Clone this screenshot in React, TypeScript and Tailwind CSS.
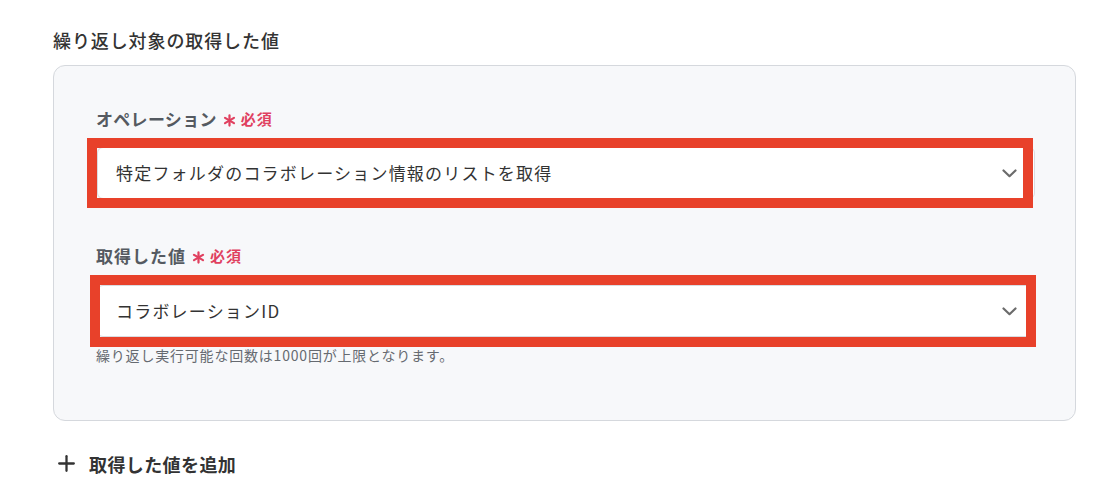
import { Plus } from "lucide-react";

const font = { fontFamily: '"Noto Sans CJK JP", "Noto Sans", sans-serif' };

function Required() {
  return (
    <span className="ml-[6px] inline-flex items-center text-[#e0405f]">
      <svg width="13" height="13" viewBox="0 0 14 14" className="mt-[2px]">
        <g stroke="currentColor" strokeWidth="2.4" strokeLinecap="round">
          <line x1="7" y1="1.5" x2="7" y2="12.5" />
          <line x1="2.2" y1="4.2" x2="11.8" y2="9.8" />
          <line x1="2.2" y1="9.8" x2="11.8" y2="4.2" />
        </g>
      </svg>
      <span className="ml-[5px] text-[15px] font-bold tracking-[1px]">必須</span>
    </span>
  );
}

function SelectBox({
  value,
  frame,
}: {
  value: string;
  frame: string;
}) {
  return (
    <div className="relative w-[938px]">
      <div className="flex h-[52px] items-center justify-between rounded-[6px] border border-[#d9dce1] bg-white pl-[18px] pr-[17px]">
        <span className="text-[17px] tracking-[1.2px] text-[#333333]">{value}</span>
        <svg width="15" height="9" viewBox="0 0 15 9" fill="none">
          <path d="M1.5 1.5 L7.5 7.2 L13.5 1.5" stroke="#6b6b6b" strokeWidth="2.2" strokeLinecap="round" strokeLinejoin="round" />
        </svg>
      </div>
      <div className={`pointer-events-none absolute border-[10px] border-[#e8412a] ${frame}`} />
    </div>
  );
}

export default function App() {
  return (
    <div className="min-h-[497px] w-[1118px] bg-white pl-[53px] pt-[28px]" style={font}>
      <h2 className="mb-[13px] text-[18px] font-medium leading-[24px] tracking-[0.9px] text-[#333333]">
        繰り返し対象の取得した値
      </h2>

      <div className="w-[1023px] rounded-[12px] border border-[#d5d8dd] bg-[#f7f8fa] pb-[56px] pl-[42px] pt-[41px]">
        <div className="flex items-center text-[17px] font-bold leading-[24px] tracking-[0.3px] text-[#555a61]">
          オペレーション
          <Required />
        </div>
        <div className="mt-[16px] pl-[1px]">
          <SelectBox
            value="特定フォルダのコラボレーション情報のリストを取得"
            frame="left-[-10px] right-[2px] top-[-9px] bottom-[-9px]"
          />
        </div>

        <div className="mt-[45px] flex items-center text-[17px] font-bold leading-[24px] tracking-[1px] text-[#555a61]">
          取得した値
          <Required />
        </div>
        <div className="mt-[17px] pl-[1px]">
          <SelectBox
            value="コラボレーションID"
            frame="left-[-7px] right-[-1px] top-[-10px] bottom-[-10px]"
          />
        </div>
        <p className="mt-[9px] text-[14px] leading-[18px] tracking-[0.8px] text-[#666a70]">
          繰り返し実行可能な回数は1000回が上限となります。
        </p>
      </div>

      <button className="mt-[30px] flex items-center leading-[24px] text-[#333333]">
        <Plus className="ml-[1px] h-[25px] w-[25px]" strokeWidth={2.2} />
        <span className="ml-[10px] text-[18px] font-bold tracking-[0.4px]">取得した値を追加</span>
      </button>
    </div>
  );
}
